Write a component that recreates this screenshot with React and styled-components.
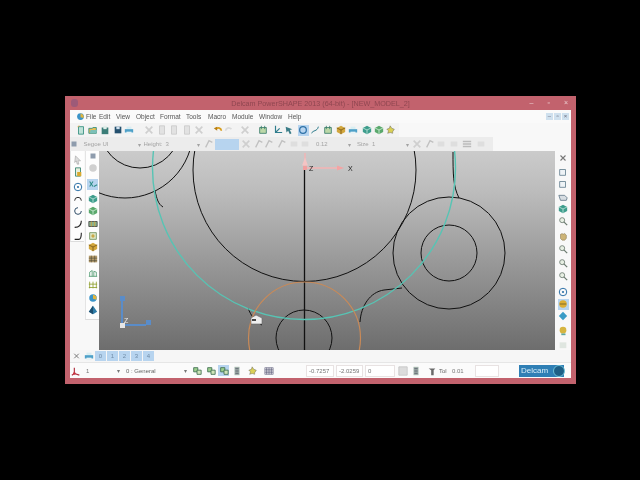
import React from 'react'
import styled, { createGlobalStyle } from 'styled-components'

const Global = createGlobalStyle`
  html, body { margin: 0; padding: 0; background: #000; }
  body { font-family: "Liberation Sans", Arial, sans-serif; }
`

const Page = styled.div`
  width: 640px;
  height: 480px;
  background: #000;
  padding: 96px 0 0 65px;
  box-sizing: border-box;
  overflow: hidden;
`

const Win = styled.div`
  width: 511px;
  height: 288px;
  box-sizing: border-box;
  background: #c2626d;
  padding: 0 5px 6px 5px;
  display: flex;
  flex-direction: column;
  filter: blur(0.5px);
`

const TitleBar = styled.div`
  height: 14px;
  display: flex;
  align-items: center;
  position: relative;
  color: #8f4650;
  font-size: 7.2px;
  justify-content: center;
  flex: none;
`

const AppDot = styled.div`
  position: absolute;
  left: 1px;
  top: 3px;
  width: 7px;
  height: 8px;
  border-radius: 3px;
  background: #9d5a78;
`

const WinBtns = styled.div`
  position: absolute;
  right: 3px;
  top: 3px;
  display: flex;
  gap: 14px;
  color: #eccdd0;
  font-size: 7px;
  line-height: 8px;
`

const Body = styled.div`
  flex: 1;
  background: #f8f8f8;
  display: flex;
  flex-direction: column;
  min-height: 0;
`

const MenuBar = styled.div`
  height: 13px;
  flex: none;
  display: flex;
  align-items: center;
  font-size: 6.5px;
  color: #555;
  background: #fafafa;
  padding-left: 5px;
`

const MenuItem = styled.span`
  width: ${p => p.$w}px;
  flex: none;
`

const MdiBtns = styled.div`
  margin-left: auto;
  margin-right: 2px;
  display: flex;
  gap: 1px;
`

const MdiBtn = styled.span`
  width: 7px;
  height: 7px;
  background: #cfe0ee;
  color: #667;
  font-size: 6px;
  line-height: 7px;
  text-align: center;
`

const Bar = styled.div`
  height: 14px;
  flex: none;
  display: flex;
  align-items: center;
  width: ${p => p.$w}px;
  background: ${p => p.$bg || '#f3f3f3'};
  box-sizing: border-box;
  font-size: 6px;
  color: #aaa;
`

const Slot = styled.div`
  flex: none;
  width: ${p => p.$w || 11}px;
  height: ${p => p.$h || 11}px;
  margin-left: ${p => p.$ml || 0}px;
  margin-top: ${p => p.$mt || 0}px;
  display: flex;
  align-items: center;
  justify-content: center;
  background: ${p => (p.$on ? '#b7d4ef' : 'transparent')};
`

const Field = styled.span`
  flex: none;
  width: ${p => p.$w}px;
  margin-left: ${p => p.$ml || 0}px;
  color: ${p => p.$c || '#a3a3a3'};
  font-size: 6px;
  white-space: nowrap;
`

const Main = styled.div`
  height: 199px;
  flex: none;
  display: flex;
`

const LeftDock = styled.div`
  width: 29px;
  flex: none;
  display: flex;
  gap: 1px;
  align-items: flex-start;
  background: #f8f8f8;
`

const Column = styled.div`
  width: 14px;
  height: ${p => p.$h}px;
  flex: none;
  display: flex;
  flex-direction: column;
  align-items: center;
  background: #fdfdfd;
  border-bottom: 1px solid #dcdcdc;
  border-left: 1px solid #e4e4e4;
  box-sizing: border-box;
`

const Viewport = styled.div`
  flex: 1;
  min-width: 0;
  background: linear-gradient(#cbcbcb, #bcbcbc 20%, #6d6d6d);
  overflow: hidden;
`

const Sheet = styled.svg`
  display: block;
  width: 456px;
  height: 199px;
`

const RightDock = styled.div`
  width: 16px;
  flex: none;
  display: flex;
  flex-direction: column;
  align-items: center;
  background: #f8f8f8;
`

const LayerRow = styled.div`
  height: 12px;
  flex: none;
  display: flex;
  align-items: center;
  background: #f6f6f6;
  padding-left: 2px;
`

const LayerBtn = styled.span`
  width: 11px;
  height: 10px;
  margin-right: 1px;
  background: #b7d4ef;
  color: #6f8ba6;
  font-size: 6px;
  line-height: 10px;
  text-align: center;
  flex: none;
`

const StatusRow = styled.div`
  height: 16px;
  flex: none;
  box-sizing: border-box;
  display: flex;
  align-items: center;
  background: #fbfbfb;
  border-top: 1px solid #e6e6e6;
`

const Coord = styled.span`
  flex: none;
  width: ${p => p.$w}px;
  height: 12px;
  margin-left: ${p => p.$ml || 2}px;
  border: 1px solid #e8e2e2;
  box-sizing: border-box;
  color: #777;
  font-size: 6px;
  line-height: 10px;
  padding-left: 2px;
  background: #fff;
`

const Logo = styled.div`
  flex: none;
  margin-left: 20px;
  width: 45px;
  height: 12px;
  background: #2f7fb5;
  color: #d7ecf8;
  font-size: 8px;
  line-height: 12px;
  padding-left: 2px;
  box-sizing: border-box;
  position: relative;
`

const LogoBall = styled.span`
  position: absolute;
  right: -1px;
  top: 0;
  width: 12px;
  height: 12px;
  border-radius: 50%;
  background: #1e5f86;
  border: 1px solid #6cc0d8;
  box-sizing: border-box;
`

const cube = (a, b) => (
  <>
    <path d="M6 1 L11 3.5 V8.5 L6 11 L1 8.5 V3.5Z" fill={a} />
    <path d="M1 3.5 L6 6 L11 3.5 M6 6 V11" fill="none" stroke={b} strokeWidth="1" />
  </>
)

const drawings = {
  grip: <path d="M3 3h6v6H3z" fill="#8e9cad" />,
  cross: <path d="M3 3 L9 9 M9 3 L3 9" stroke="#777" strokeWidth="1.3" />,
  bigx: <path d="M2 2 L10 10 M10 2 L2 10" stroke="#cfcfcf" strokeWidth="2" />,
  page: <path d="M3 1h6v10H3z" fill="#e2e2e2" stroke="#c9c9c9" />,
  newdoc: <><path d="M3 2h6v9H3z" fill="#bfe2d8" stroke="#2f8d7d" /><path d="M2 2l2-1" stroke="#e0a030" /></>,
  folder: <><path d="M1 4h4l1-1h4v7H1z" fill="#e5bd55" stroke="#2f8d7d" /><path d="M3 6h8l-1 4H2z" fill="#7cc0b8" /></>,
  save: <><path d="M2 3h8v8H2z" fill="#3b7d78" /><path d="M4 1h4v4H4z" fill="#dfeee9" /></>,
  disk: <><path d="M2 2h8v8H2z" fill="#24506e" /><path d="M4 2h4v3H4z" fill="#cfe0ee" /></>,
  print: <><path d="M3 2h6v3H3z" fill="#d9eef2" /><path d="M1 5h10v4H1z" fill="#4da0c8" /><path d="M3 8h6v3H3z" fill="#e7f2f5" /></>,
  undo: <><path d="M3 5c3-3 7-1 7 2" fill="none" stroke="#d79c1c" strokeWidth="2" /><path d="M1 4l4-2v5z" fill="#b77d10" /></>,
  redo: <path d="M9 5C6 2 2 4 2 7" fill="none" stroke="#dadada" strokeWidth="2" />,
  frame: <><path d="M2 3h8v7H2z" fill="#bcd8a8" stroke="#3a7d6a" /><path d="M4 1v4M8 1v4" stroke="#3a7d6a" /></>,
  axes: <path d="M3 1v8h8M3 9l5-5" fill="none" stroke="#2f7d8d" strokeWidth="1.4" />,
  arrows: <path d="M2 2l8 3-3 1 2 4-2 1-2-4-2 2z" fill="#3b7d88" />,
  circle: <circle cx="6" cy="6" r="4" fill="none" stroke="#2f72a8" strokeWidth="1.5" />,
  curve: <path d="M2 10c1-4 7-2 8-8" fill="none" stroke="#2f7d8d" strokeWidth="1.2" />,
  arc: <path d="M2 8a4 4 0 0 1 8 0" fill="none" stroke="#333" strokeWidth="1.2" />,
  gap: <path d="M6 2a4 4 0 1 0 4 4" fill="none" stroke="#33506a" strokeWidth="1.2" />,
  target: <><circle cx="6" cy="6" r="4.5" fill="none" stroke="#2f72a8" strokeWidth="1.2" /><circle cx="6" cy="6" r="1.3" fill="#2f72a8" /></>,
  sweep: <path d="M2 10c5 0 8-3 8-8" fill="none" stroke="#222" strokeWidth="1.3" />,
  corner: <path d="M2 10h5c2 0 3-2 3-8" fill="none" stroke="#222" strokeWidth="1.3" />,
  cursor: <path d="M3 1l6 6H6l1 4-2 0-1-4-2 2z" fill="#ddd" stroke="#999" strokeWidth=".6" />,
  doc: <><path d="M3 1h6v10H3z" fill="#e6f0dd" stroke="#2f7d6a" /><path d="M5 6h5v5H5z" fill="#d9a92e" /></>,
  xy: <path d="M2 3l4 6M6 3L2 9M7 9l4-2" fill="none" stroke="#2f8d88" strokeWidth="1.3" />,
  sphere: <circle cx="6" cy="6" r="4.5" fill="#d0d0d0" />,
  teal: cube('#3d9c8c', '#bfe6d8'),
  green: cube('#5aa86c', '#d0eed8'),
  wire: <><path d="M1 3h10v6H1z" fill="#8ab28a" stroke="#444" /><path d="M4 3v6M8 3v6" stroke="#d0a040" /></>,
  box: <><path d="M2 2h8v8H2z" fill="#dfe8c8" stroke="#6d8f5c" /><circle cx="6" cy="6" r="2" fill="#c9a848" /></>,
  solid: cube('#d2a63c', '#7b5a18'),
  mesh: <><path d="M1 2h10v8H1z" fill="#b59b6c" /><path d="M1 5h10M1 8h10M4 2v8M8 2v8" stroke="#4a4a38" strokeWidth=".7" /></>,
  ribs: <path d="M2 10V5l3-2v7M7 10V4l3 1v5M1 10h10" fill="none" stroke="#4f9a70" strokeWidth="1" />,
  cage: <path d="M2 2v8M6 2v8M10 2v8M1 5h10M1 9h10" stroke="#8f9f2f" strokeWidth="1" />,
  ball: <><circle cx="6" cy="6" r="4.5" fill="#3b94c8" /><path d="M6 2a4.5 4.5 0 0 1 4 6L6 7z" fill="#e2b53d" /></>,
  dart: <><path d="M6 1l5 7-5 3-5-3z" fill="#2f7da8" /><path d="M6 1v10L1 8z" fill="#1d4f70" /></>,
  plane: <path d="M1 4h7l3 3-1 3H3z" fill="#d7dde2" stroke="#647a8a" />,
  boxSq: <path d="M2 3h7v7H2z" fill="#eef3f6" stroke="#64808f" />,
  glass: <><circle cx="5" cy="5" r="3" fill="#e7efe3" stroke="#6b7b70" /><path d="M7 7l4 4" stroke="#6b7b70" strokeWidth="1.5" /></>,
  hand: <path d="M3 9V4l2-1 1 1 2-1 2 2v4l-2 2H5z" fill="#cdb477" stroke="#6b5a33" strokeWidth=".5" />,
  gold: <><circle cx="6" cy="6" r="4.5" fill="#dcae35" /><path d="M2 6h8" stroke="#6f6028" /></>,
  diamond: <path d="M6 1l5 5-5 5-5-5z" fill="#3a9cc6" />,
  lamp: <><circle cx="6" cy="5" r="4" fill="#d6b540" /><path d="M4 9h5v2H4z" fill="#5da6a0" /></>,
  faded: <path d="M2 4h8v7H2z" fill="#dfe6e0" />,
  grid: <path d="M1 2v8M3 2v8M5 2v8M7 2v8M9 2v8M11 2v8M1 2h10M1 4h10M1 6h10M1 8h10M1 10h10" stroke="#446" strokeWidth=".6" />,
  tree: <><path d="M2 2h5v5H2z" fill="#9ccf8e" stroke="#3f6d4f" /><path d="M6 5h5v5H6z" fill="#cfe5b8" stroke="#3f6d4f" /></>,
  star: <><path d="M5 1l2 3 3 1-2 3v2L5 9l-3 1 1-3-2-2 3-1z" fill="#d9cf55" stroke="#555" strokeWidth=".5" /></>,
  calc: <><path d="M3 1h6v10H3z" fill="#a3b4ac" /><path d="M4 3h4M4 5h4M4 7h4M4 9h4" stroke="#556" strokeWidth=".8" /></>,
  tool: <path d="M2 3h8L8 5v6H5V5z" fill="#6a6a6a" />,
  rule: <path d="M1 1h10v10H1z" fill="#dcdcdc" stroke="#c4c4c4" />,
  gauge: <path d="M2 10l4-8 4 2" fill="none" stroke="#c0c0c0" strokeWidth="1.6" />,
  pale: <path d="M2 3h8v6H2z" fill="#dedede" />,
  lines: <path d="M1 3h10M1 6h10M1 9h10" stroke="#bbb" strokeWidth="1.6" />,
  axisred: <><path d="M4 9V2M4 9l6 2M4 9L1 11" stroke="#b03040" strokeWidth="1.4" /><circle cx="4" cy="9" r="1.6" fill="#c8323f" /></>,
}

const Glyph = ({ k, s = 11 }) => (
  <svg width={s} height={s} viewBox="0 0 12 12">{drawings[k]}</svg>
)

const Tool = ({ k, ml, mt, on, w, h }) => (
  <Slot $ml={ml} $mt={mt} $on={on} $w={w} $h={h}><Glyph k={k} s={10} /></Slot>
)

// gap before each tool, worked out from where the previous one ended
const gaps = (list, from) => {
  let end = from
  return list.map(([k, c, on]) => {
    const gap = c - 5.5 - end
    end = c + 5.5
    return { k, gap, on }
  })
}

const menu = [['File', 13], ['Edit', 17], ['View', 20], ['Object', 24], ['Format', 26], ['Tools', 22], ['Macro', 24], ['Module', 27], ['Window', 29], ['Help', 20]]

const topTools = gaps([
  ['newdoc', 81], ['folder', 93], ['save', 105], ['disk', 118], ['print', 129],
  ['bigx', 149], ['page', 162], ['page', 174], ['page', 187], ['bigx', 199],
  ['undo', 218], ['redo', 229], ['bigx', 245], ['frame', 263], ['axes', 278], ['arrows', 289],
  ['circle', 303, true], ['curve', 315], ['frame', 328], ['solid', 341], ['print', 353],
  ['teal', 367], ['green', 379], ['star', 391],
], 70)

const midTools = gaps([['bigx', 245], ['gauge', 258], ['gauge', 268], ['gauge', 281], ['pale', 293], ['pale', 304]], 238)
const endTools = gaps([['bigx', 418], ['gauge', 431], ['pale', 442], ['pale', 455], ['lines', 468], ['pale', 482]], 411)

const leftA = gaps([['cursor', 160], ['doc', 172], ['target', 187], ['arc', 199], ['gap', 211], ['sweep', 224], ['corner', 236]], 151)
const leftB = gaps([['grip', 156], ['sphere', 168], ['xy', 184, true], ['teal', 199], ['green', 211], ['wire', 224], ['box', 236], ['solid', 247], ['mesh', 259], ['ribs', 273], ['cage', 285], ['ball', 298], ['dart', 310]], 151)
const rightTools = gaps([['cross', 158], ['boxSq', 172], ['boxSq', 184], ['plane', 197], ['teal', 209], ['glass', 221], ['hand', 236], ['glass', 249], ['glass', 263], ['glass', 276], ['target', 292], ['gold', 304, true], ['diamond', 316], ['lamp', 331], ['faded', 344]], 151)

const Drawing = () => (
  <Sheet viewBox="99 151 456 199">
    <g fill="none" stroke="#111" strokeWidth="1">
      <circle cx="304.5" cy="170" r="111.5" />
      <circle cx="140" cy="128" r="40" />
      <circle cx="125" cy="130" r="68" />
      <circle cx="449" cy="253" r="56" />
      <circle cx="449" cy="253" r="28" />
      <circle cx="304" cy="338" r="28" />
      <path d="M155 191c2 8 3 13 8 16" />
      <path d="M248 308c3 8 7 13 14 17" />
      <path d="M360 322c1-16 10-30 24-32 6-1 12-1 18-2" />
      <path d="M453 152c0 22 0 34 6 46" />
      <path d="M304.5 168V350" strokeWidth="1.3" />
    </g>
    <circle cx="304" cy="168" r="151.5" fill="none" stroke="#57c4b4" strokeWidth="1.4" />
    <circle cx="304.5" cy="338" r="56" fill="none" stroke="#c98a58" strokeWidth="1.2" />
    <path d="M305 168V153M305 168H338" stroke="#f4b4b4" strokeWidth="1.4" />
    <path d="M337 165.5l7 2.5-7 2.5z" fill="#f4a4a4" />
    <path d="M302 165.5l3-8 3 8z" fill="#f4c4c4" />
    <rect x="303" y="166" width="4" height="4" fill="#f0a0a0" />
    <text x="309" y="171" fontSize="7" fill="#222" fontFamily="Liberation Sans">Z</text>
    <text x="348" y="171" fontSize="7" fill="#222" fontFamily="Liberation Sans">X</text>
    <path d="M122 325V300M122 325H146" stroke="#5a8cc8" strokeWidth="2" />
    <rect x="120" y="296" width="5" height="5" fill="#5a8cc8" />
    <rect x="146" y="320" width="5" height="5" fill="#5a8cc8" />
    <rect x="120" y="323" width="5" height="5" fill="#e6e6e6" />
    <text x="124" y="323" fontSize="7" fill="#eee" fontFamily="Liberation Sans">Z</text>
    <path d="M251 318l5-3 6 3v6h-11z" fill="#eeeeee" stroke="#666" strokeWidth=".6" />
    <rect x="252" y="319" width="4" height="2" fill="#444" />
  </Sheet>
)

export default function App() {
  return (
    <Page>
      <Global />
      <Win>
        <TitleBar>
          <AppDot />
          Delcam PowerSHAPE 2013 (64-bit) - [NEW_MODEL_2]
          <WinBtns><span>–</span><span>▫</span><span>×</span></WinBtns>
        </TitleBar>
        <Body>
          <MenuBar>
            <Slot $w={11}><Glyph k="ball" s={9} /></Slot>
            {menu.map(([t, w]) => <MenuItem key={t} $w={w}>{t}</MenuItem>)}
            <MdiBtns><MdiBtn>–</MdiBtn><MdiBtn>▫</MdiBtn><MdiBtn>×</MdiBtn></MdiBtns>
          </MenuBar>
          <Bar $w={329}>
            {topTools.map((t, i) => <Tool key={i} k={t.k} ml={t.gap} on={t.on} />)}
          </Bar>
          <Bar $w={423} $bg="#ececec">
            <Tool k="grip" ml={-1.5} />
            <Field $w={54} $ml={4}>Segoe UI</Field>
            <Field $w={6}>▾</Field>
            <Field $w={22}>Height:</Field>
            <Field $w={31}>3</Field>
            <Field $w={7}>▾</Field>
            <Tool k="gauge" />
            <Slot $on $w={12} />
            <Slot $on $w={12} />
            {midTools.map((t, i) => <Tool key={i} k={t.k} ml={t.gap} />)}
            <Field $w={32} $ml={6}>0.12</Field>
            <Field $w={9}>▾</Field>
            <Field $w={15}>Size</Field>
            <Field $w={34}>1</Field>
            <Field $w={4}>▾</Field>
            {endTools.map((t, i) => <Tool key={i} k={t.k} ml={t.gap} />)}
          </Bar>
          <Main>
            <LeftDock>
              <Column $h={91}>{leftA.map((t, i) => <Tool key={i} k={t.k} mt={t.gap} />)}</Column>
              <Column $h={169}>{leftB.map((t, i) => <Tool key={i} k={t.k} mt={t.gap} on={t.on} />)}</Column>
            </LeftDock>
            <Viewport><Drawing /></Viewport>
            <RightDock>
              {rightTools.map((t, i) => <Tool key={i} k={t.k} mt={t.gap} on={t.on} />)}
            </RightDock>
          </Main>
          <LayerRow>
            <Tool k="cross" w={9} />
            <Tool k="print" ml={2} />
            <Slot $w={1} />
            {['0', '1', '2', '3', '4'].map(n => <LayerBtn key={n}>{n}</LayerBtn>)}
          </LayerRow>
          <StatusRow>
            <Tool k="axisred" />
            <Field $w={31} $ml={5} $c="#777">1</Field>
            <Field $w={9} $c="#777">▾</Field>
            <Field $w={58} $c="#666">0 : General</Field>
            <Field $w={7} $c="#777">▾</Field>
            <Tool k="tree" />
            <Tool k="tree" ml={3} />
            <Tool k="tree" ml={2} on />
            <Tool k="calc" ml={2} />
            <Tool k="star" ml={5} />
            <Tool k="grid" ml={5} />
            <Coord $w={28} $ml={32}>-0.7257</Coord>
            <Coord $w={27}>-2.0259</Coord>
            <Coord $w={30}>0</Coord>
            <Tool k="rule" ml={2} />
            <Tool k="calc" ml={2} />
            <Tool k="tool" ml={5} />
            <Field $w={13} $ml={2} $c="#666">Tol</Field>
            <Field $w={22} $c="#777">0.01</Field>
            <Coord $w={24} $ml={1} />
            <Logo>Delcam<LogoBall /></Logo>
          </StatusRow>
        </Body>
      </Win>
    </Page>
  )
}
